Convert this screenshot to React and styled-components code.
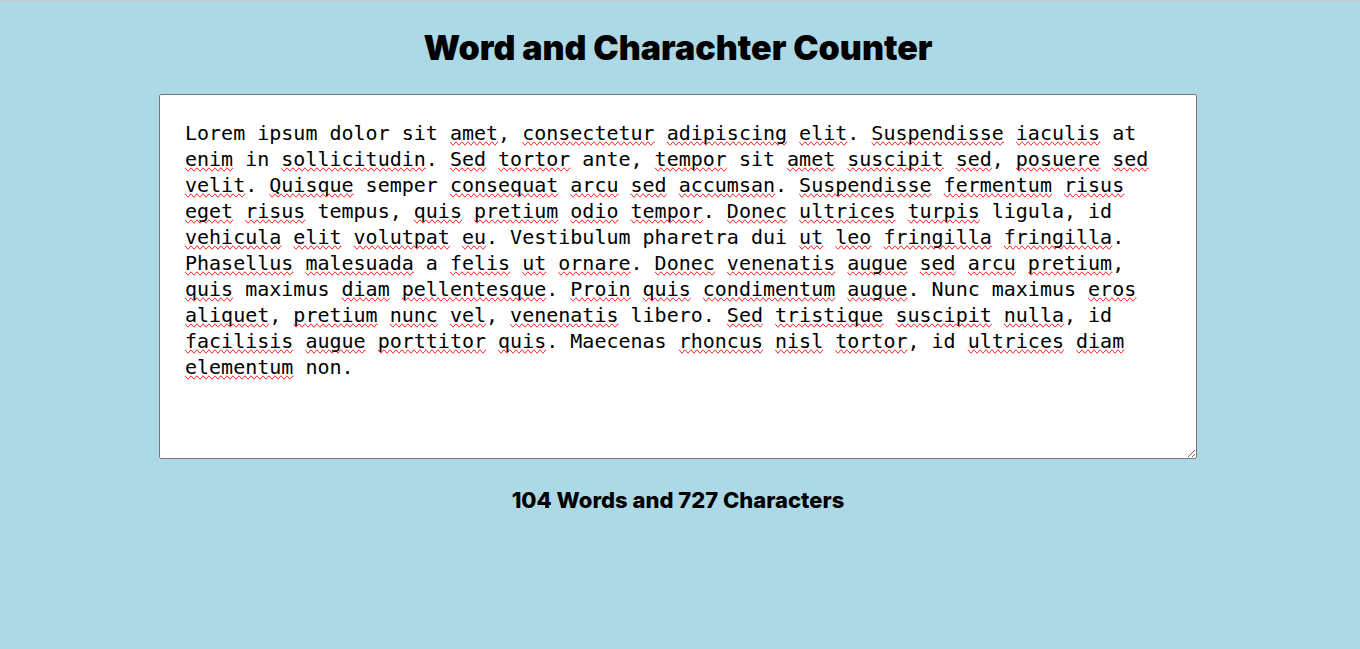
import React, { useState } from "react";
import styled, { createGlobalStyle } from "styled-components";

const GlobalStyle = createGlobalStyle`
  *, *::before, *::after { box-sizing: border-box; }
  body {
    margin: 0;
    background: #add8e6;
    color: #000;
    font-family: Inter, "Open Sans", sans-serif;
  }
`;

const Page = styled.main`
  display: flex;
  flex-direction: column;
  min-height: 100vh;
  padding: 19px 163px 19px 159px;
  border-top: 1px solid #c8c8c8;
  text-align: center;
`;

const Title = styled.h1`
  margin: 0 0 18px;
  font-size: 34px;
  font-weight: 900;
  line-height: 56px;
`;

const Counts = styled.p`
  margin: 24px 0 0;
  font-size: 22px;
  font-weight: 800;
  line-height: 34px;
`;

const Editor = styled.div`
  display: grid;
  background: #fff;
  border-radius: 2px;
  text-align: left;

  > * {
    grid-area: 1 / 1;
    width: 100%;
    margin: 0;
    padding: 25px 25px 26px;
    border: 1px solid transparent;
    border-radius: 2px;
    font-family: "DejaVu Sans Mono", monospace;
    font-size: 20px;
    line-height: 26px;
    white-space: pre-wrap;
    overflow-wrap: break-word;
  }
`;

const SpellingLayer = styled.div`
  color: transparent;
  pointer-events: none;
  user-select: none;
`;

const Misspelled = styled.span`
  text-decoration: spelling-error;
`;

const TextBox = styled.textarea`
  display: block;
  border-color: #767676;
  background: transparent;
  color: #000;
  outline: none;
  resize: both;
`;

const SAMPLE =
  "Lorem ipsum dolor sit amet, consectetur adipiscing elit. Suspendisse iaculis at enim in sollicitudin. Sed tortor ante, tempor sit amet suscipit sed, posuere sed velit. Quisque semper consequat arcu sed accumsan. Suspendisse fermentum risus eget risus tempus, quis pretium odio tempor. Donec ultrices turpis ligula, id vehicula elit volutpat eu. Vestibulum pharetra dui ut leo fringilla fringilla. Phasellus malesuada a felis ut ornare. Donec venenatis augue sed arcu pretium, quis maximus diam pellentesque. Proin quis condimentum augue. Nunc maximus eros aliquet, pretium nunc vel, venenatis libero. Sed tristique suscipit nulla, id facilisis augue porttitor quis. Maecenas rhoncus nisl tortor, id ultrices diam elementum non.";

const KNOWN_WORDS = new Set(
  "Lorem ipsum dolor sit at in ante semper tempus ligula id Vestibulum pharetra dui a Nunc maximus libero Maecenas non".split(" ")
);

function markSpelling(text) {
  return text.split(/([A-Za-z]+)/).map((part, i) =>
    i % 2 === 1 && !KNOWN_WORDS.has(part) ? (
      <Misspelled key={i}>{part}</Misspelled>
    ) : (
      part
    )
  );
}

export default function App() {
  const [text, setText] = useState(SAMPLE);
  const words = text.split(/\s+/).filter(Boolean).length;

  return (
    <>
      <GlobalStyle />
      <Page>
        <Title id="title">Word and Charachter Counter</Title>
        <Editor>
          <SpellingLayer aria-hidden="true">{markSpelling(text)}</SpellingLayer>
          <TextBox
            aria-labelledby="title"
            rows={12}
            spellCheck={false}
            value={text}
            onChange={(e) => setText(e.target.value)}
          />
        </Editor>
        <Counts>
          {words} Words and {text.length} Characters
        </Counts>
      </Page>
    </>
  );
}
